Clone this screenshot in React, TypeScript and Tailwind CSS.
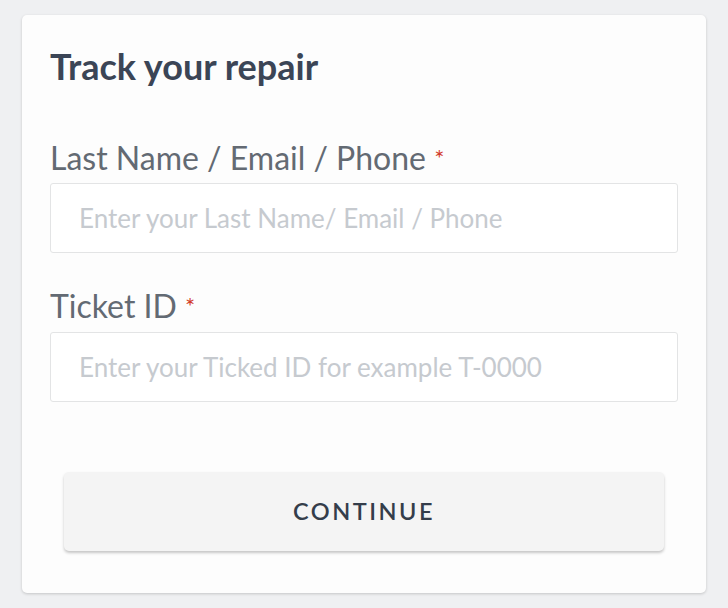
export default function App() {
  return (
    <div className="min-h-screen bg-[#eff0f2] px-[22px] pt-[15px] font-['Lato',sans-serif]">
      <div className="w-[684px] h-[578px] rounded-[5px] bg-[#fdfdfd] shadow-[0_1px_3px_rgba(0,0,0,0.18)] px-[28px] pt-[31px]">
        <h1 className="text-[36px] font-bold leading-[40px] text-[#3b4556]">Track your repair</h1>

        <label className="mt-[54px] block text-[32px] leading-[36px] text-[#636a73]">
          Last Name / Email / Phone <span className="text-[#d23c2c] text-[24px] align-top">*</span>
        </label>
        <input
          className="mt-[7px] block w-[628px] h-[70px] rounded-[3px] border border-[#e3e4e5] bg-white px-[28px] text-[26px] text-[#555] placeholder:text-[#c6cacf] outline-none"
          placeholder="Enter your Last Name/ Email / Phone"
        />

        <label className="mt-[35px] block text-[32px] leading-[36px] text-[#636a73]">
          Ticket ID <span className="text-[#d23c2c] text-[24px] align-top">*</span>
        </label>
        <input
          className="mt-[8px] block w-[628px] h-[70px] rounded-[3px] border border-[#e3e4e5] bg-white px-[28px] text-[26px] text-[#555] placeholder:text-[#c6cacf] outline-none"
          placeholder="Enter your Ticked ID for example T-0000"
        />

        <div className="mt-[70px] px-[14px]">
          <button className="w-[600px] h-[79px] rounded-[5px] bg-[#f4f4f4] shadow-[0_2px_3px_rgba(0,0,0,0.22)] text-[23.5px] font-semibold tracking-[2.5px] text-[#343d4a]">
            CONTINUE
          </button>
        </div>
      </div>
    </div>
  );
}
